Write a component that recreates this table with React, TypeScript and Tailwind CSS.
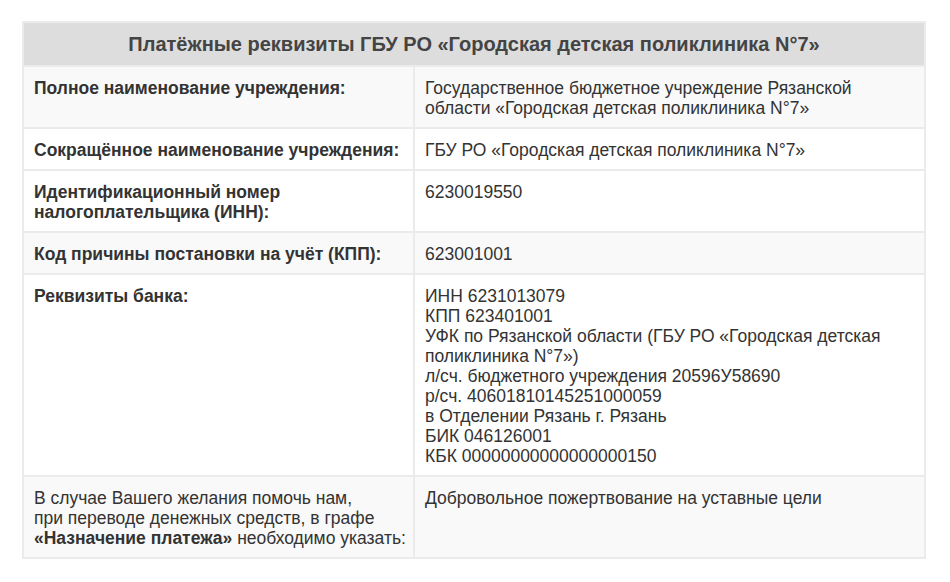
const rows: { label: React.ReactNode; value: React.ReactNode; shaded: boolean }[] = [
  {
    label: <b>Полное наименование учреждения:</b>,
    value: (
      <>
        Государственное бюджетное учреждение Рязанской
        <br />
        области «Городская детская поликлиника N°7»
      </>
    ),
    shaded: true,
  },
  {
    label: <b>Сокращённое наименование учреждения:</b>,
    value: "ГБУ РО «Городская детская поликлиника N°7»",
    shaded: false,
  },
  {
    label: (
      <b>
        Идентификационный номер
        <br />
        налогоплательщика (ИНН):
      </b>
    ),
    value: "6230019550",
    shaded: false,
  },
  {
    label: <b>Код причины постановки на учёт (КПП):</b>,
    value: "623001001",
    shaded: true,
  },
  {
    label: <b>Реквизиты банка:</b>,
    value: (
      <>
        ИНН 6231013079
        <br />
        КПП 623401001
        <br />
        УФК по Рязанской области (ГБУ РО «Городская детская
        <br />
        поликлиника N°7»)
        <br />
        л/сч. бюджетного учреждения 20596У58690
        <br />
        р/сч. 40601810145251000059
        <br />
        в Отделении Рязань г. Рязань
        <br />
        БИК 046126001
        <br />
        КБК 00000000000000000150
      </>
    ),
    shaded: false,
  },
  {
    label: (
      <>
        В случае Вашего желания помочь нам,
        <br />
        при переводе денежных средств, в графе
        <br />
        <b>«Назначение платежа»</b> необходимо указать:
      </>
    ),
    value: "Добровольное пожертвование на уставные цели",
    shaded: true,
  },
]

export default function App() {
  return (
    <div className="min-h-[582px] bg-white px-[22px] pt-[21px] font-['Liberation_Sans',Arial,sans-serif] text-[17.5px] leading-[20px] text-[#333]">
      <table className="w-[904px] table-fixed border-collapse border-2 border-[#ebebeb]">
        <colgroup>
          <col className="w-[391px]" />
          <col />
        </colgroup>
        <thead>
          <tr>
            <th
              colSpan={2}
              className="h-[44px] bg-[#dddddd] text-center text-[20px] font-bold leading-[24px] text-[#444]"
            >
              Платёжные реквизиты ГБУ РО «Городская детская поликлиника N°7»
            </th>
          </tr>
        </thead>
        <tbody>
          {rows.map((r, i) => (
            <tr key={i} className={r.shaded ? "bg-[#f9f9f9]" : "bg-white"}>
              <td className="whitespace-nowrap border-2 border-[#ebebeb] pl-[10px] pr-[4px] pt-[11px] pb-[9px] align-top">
                {r.label}
              </td>
              <td className="whitespace-nowrap border-2 border-[#ebebeb] px-[10px] pt-[11px] pb-[9px] align-top">
                {r.value}
              </td>
            </tr>
          ))}
        </tbody>
      </table>
    </div>
  )
}
